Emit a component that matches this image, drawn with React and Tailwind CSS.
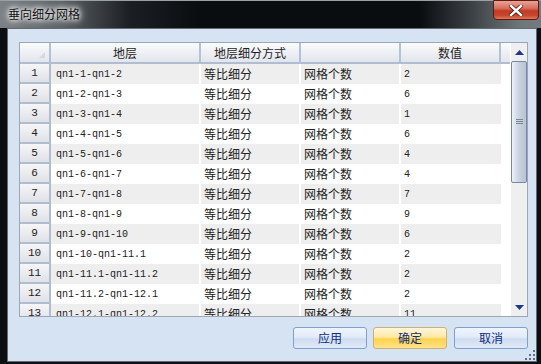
import React from "react";

const rows = [
  ["1", "qn1-1-qn1-2", "2"],
  ["2", "qn1-2-qn1-3", "6"],
  ["3", "qn1-3-qn1-4", "1"],
  ["4", "qn1-4-qn1-5", "6"],
  ["5", "qn1-5-qn1-6", "4"],
  ["6", "qn1-6-qn1-7", "4"],
  ["7", "qn1-7-qn1-8", "7"],
  ["8", "qn1-8-qn1-9", "9"],
  ["9", "qn1-9-qn1-10", "6"],
  ["10", "qn1-10-qn1-11.1", "2"],
  ["11", "qn1-11.1-qn1-11.2", "2"],
  ["12", "qn1-11.2-qn1-12.1", "2"],
  ["13", "qn1-12.1-qn1-12.2", "11"],
];

const cjk = "font-['Noto_Sans_CJK_SC',sans-serif]";
const mono = "font-['Liberation_Mono','Noto_Sans_CJK_SC',monospace]";

function HeaderCell({ w, children }) {
  return (
    <div
      className={`${w} shrink-0 h-full flex items-center justify-center border-r-2 border-[#b4c0d4] bg-gradient-to-b from-[#fbfbfc] to-[#e2e5ec] text-[12px] text-[#1e1e1e] leading-none ${cjk}`}
    >
      {children}
    </div>
  );
}

export default function App() {
  return (
    <div className="w-[541px] h-[364px] bg-[#0c0f12] flex flex-col overflow-hidden">
      {/* Title bar */}
      <div className="relative h-[28px] shrink-0 bg-[linear-gradient(to_right,#7b8185_0px,#5d6367_60px,#1b1f23_130px,#0a0d10_200px,#0a0d10_420px,#3a3f43_470px,#6f767a_520px,#747b7f_541px)] border-t border-[#9aa0a4]">
        <div
          className={`absolute left-[8px] top-[6px] text-[12px] leading-[14px] text-[#111] ${cjk} [text-shadow:0_0_4px_#fff,0_0_7px_#fff,0_0_10px_#fff]`}
        >
          垂向细分网格
        </div>
        <div className="absolute right-[2px] top-[-1px] w-[46px] h-[20px] rounded-b-[4px] border border-[#5a1a14] bg-[linear-gradient(to_bottom,#e9a394_0%,#d8705e_40%,#c23a24_55%,#c9452c_80%,#e07a5a_100%)] flex items-center justify-center">
          <svg width="14" height="11" viewBox="0 0 14 11">
            <path d="M2 1 L12 10 M12 1 L2 10" stroke="#4a1a14" strokeWidth="4" strokeLinecap="square" />
            <path d="M2 1 L12 10 M12 1 L2 10" stroke="#ffffff" strokeWidth="2.4" strokeLinecap="square" />
          </svg>
        </div>
      </div>

      {/* Body frame */}
      <div className="flex-1 flex pl-[7px] pr-[4px] pb-[2px]">
        <div className="relative flex-1 border border-[#646a70] bg-[#d5e3f2] flex flex-col pl-[11px] pr-[8px] pt-[13px]">
          {/* Table */}
          <div className="w-[509px] h-[275px] border border-[#9ba6b6] bg-white flex overflow-hidden">
            <div className="flex flex-col w-[490px] shrink-0 h-full overflow-hidden">
              {/* header */}
              <div className="flex h-[21px] shrink-0 border-b-2 border-[#b0bcd0]">
                <div className="w-[31px] shrink-0 h-full relative border-r-2 border-[#b4c0d4] bg-gradient-to-b from-[#fbfbfc] to-[#e2e5ec]">
                  <svg className="absolute right-[4px] bottom-[4px]" width="6" height="6" viewBox="0 0 6 6">
                    <path d="M6 0 L6 6 L0 6 Z" fill="#d4d8e0" />
                  </svg>
                </div>
                <HeaderCell w="w-[150px]">地层</HeaderCell>
                <HeaderCell w="w-[100px]">地层细分方式</HeaderCell>
                <HeaderCell w="w-[100px]"></HeaderCell>
                <HeaderCell w="w-[100px]">数值</HeaderCell>
                <div className="flex-1 h-full bg-gradient-to-b from-[#fbfbfc] to-[#e2e5ec]" />
              </div>
              {/* rows */}
              {rows.map((r, i) => {
                const bg = i % 2 === 0 ? "bg-[#eeeeee]" : "bg-white";
                return (
                  <div key={i} className="flex h-[20px] shrink-0">
                    <div
                      className={`w-[31px] shrink-0 h-full flex items-center justify-center border-r-2 border-b-2 border-[#b0bcd0] bg-gradient-to-b from-[#f6f6f8] to-[#dfe1e7] text-[11px] text-[#222] ${mono}`}
                    >
                      {r[0]}
                    </div>
                    <div className={`w-[150px] shrink-0 h-full flex items-center pl-[5px] border-r-2 border-white ${bg} text-[10px] text-[#222] ${mono}`}>
                      {r[1]}
                    </div>
                    <div className={`w-[100px] shrink-0 h-full flex items-center pl-[3px] border-r-2 border-white ${bg} text-[12px] text-[#222] ${cjk}`}>
                      等比细分
                    </div>
                    <div className={`w-[100px] shrink-0 h-full flex items-center pl-[3px] border-r-2 border-white ${bg} text-[12px] text-[#222] ${cjk}`}>
                      网格个数
                    </div>
                    <div className={`w-[100px] shrink-0 h-full flex items-center pl-[3px] ${bg} text-[10px] text-[#222] ${mono}`}>
                      {r[2]}
                    </div>
                    <div className="flex-1 h-full bg-white" />
                  </div>
                );
              })}
            </div>
            {/* scrollbar */}
            <div className="w-[17px] shrink-0 h-full flex flex-col bg-[#efefef] border-l border-white">
              <div className="h-[18px] shrink-0 flex items-center justify-center">
                <svg width="9" height="5" viewBox="0 0 9 5">
                  <path d="M0 5 L4.5 0 L9 5 Z" fill="#1d3a8a" />
                </svg>
              </div>
              <div className="h-[122px] shrink-0 rounded-[2px] border border-[#7686a6] bg-[linear-gradient(to_right,#eef2f7,#d3dbe6_35%,#c3cddb_65%,#b9c4d4)] flex items-center justify-center">
                <svg width="7" height="6" viewBox="0 0 7 6">
                  <path d="M0 0.5 H7 M0 2.5 H7 M0 4.5 H7" stroke="#7a8598" strokeWidth="1" />
                </svg>
              </div>
              <div className="flex-1" />
              <div className="h-[18px] shrink-0 flex items-center justify-center">
                <svg width="9" height="5" viewBox="0 0 9 5">
                  <path d="M0 0 L9 0 L4.5 5 Z" fill="#1d3a8a" />
                </svg>
              </div>
            </div>
          </div>

          {/* Buttons */}
          <div className="mt-[10px] w-[509px] flex justify-end">
            <div className={`w-[74px] h-[22px] rounded-[3px] border border-[#7f9fcf] bg-[linear-gradient(to_bottom,#eef4fc_0%,#e2ecf9_45%,#cfdcf0_55%,#e0eaf7_100%)] flex items-center justify-center text-[12px] text-[#0f2d7a] ${cjk}`}>
              应用
            </div>
            <div className={`ml-[6px] w-[74px] h-[22px] rounded-[3px] border border-[#c9b27a] bg-[linear-gradient(to_bottom,#fff6d8_0%,#ffe9a8_45%,#ffd34a_55%,#ffe28a_100%)] flex items-center justify-center text-[12px] text-[#0f2d7a] ${cjk}`}>
              确定
            </div>
            <div className={`ml-[7px] w-[74px] h-[22px] rounded-[3px] border border-[#7f9fcf] bg-[linear-gradient(to_bottom,#eef4fc_0%,#e2ecf9_45%,#cfdcf0_55%,#e0eaf7_100%)] flex items-center justify-center text-[12px] text-[#0f2d7a] ${cjk}`}>
              取消
            </div>
          </div>

          {/* resize grip */}
          <svg className="absolute right-[1px] bottom-[1px]" width="10" height="10" viewBox="0 0 10 10">
            <g fill="#5d6f8e">
              <rect x="8" y="0" width="2" height="2" />
              <rect x="4" y="4" width="2" height="2" />
              <rect x="8" y="4" width="2" height="2" />
              <rect x="0" y="8" width="2" height="2" />
              <rect x="4" y="8" width="2" height="2" />
              <rect x="8" y="8" width="2" height="2" />
            </g>
          </svg>
        </div>
      </div>
    </div>
  );
}
